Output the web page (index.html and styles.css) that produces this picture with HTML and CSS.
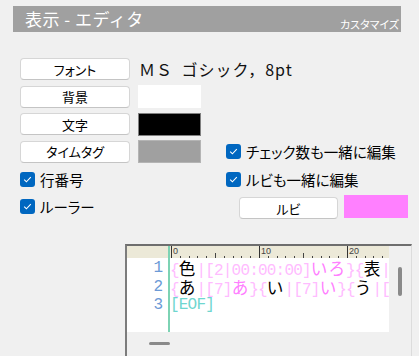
FILE: index.html
```html
<!DOCTYPE html>
<html lang="ja">
<head>
    <meta charset="UTF-8">
    <title>表示 - エディタ</title>
    <link rel="stylesheet" href="styles.css">
</head>
<body>
<div class="header">
    <span class="title">表示 - エディタ</span>
    <span class="sub">カスタマイズ</span>
</div>

<div class="settings">
    <div class="cell">
        <button class="btn">フォント</button>
        <span class="fontname">ＭＳ ゴシック，8pt</span>
    </div>
    <div class="cell"></div>

    <div class="cell">
        <button class="btn">背景</button>
        <span class="swatch white"></span>
    </div>
    <div class="cell"></div>

    <div class="cell">
        <button class="btn">文字</button>
        <span class="swatch black"></span>
    </div>
    <div class="cell"></div>

    <div class="cell">
        <button class="btn">タイムタグ</button>
        <span class="swatch gray"></span>
    </div>
    <div class="cell">
        <label class="check"><svg width="15" height="15" viewBox="0 0 15 15"><rect width="15" height="15" rx="3" fill="#0067c0"/><polyline points="4.2,7.6 6.4,9.8 10.8,5.2" fill="none" stroke="#fff" stroke-width="1.1"/></svg>チェック数も一緒に編集</label>
    </div>

    <div class="cell">
        <label class="check"><svg width="15" height="15" viewBox="0 0 15 15"><rect width="15" height="15" rx="3" fill="#0067c0"/><polyline points="4.2,7.6 6.4,9.8 10.8,5.2" fill="none" stroke="#fff" stroke-width="1.1"/></svg>行番号</label>
    </div>
    <div class="cell">
        <label class="check"><svg width="15" height="15" viewBox="0 0 15 15"><rect width="15" height="15" rx="3" fill="#0067c0"/><polyline points="4.2,7.6 6.4,9.8 10.8,5.2" fill="none" stroke="#fff" stroke-width="1.1"/></svg>ルビも一緒に編集</label>
    </div>

    <div class="cell">
        <label class="check"><svg width="15" height="15" viewBox="0 0 15 15"><rect width="15" height="15" rx="3" fill="#0067c0"/><polyline points="4.2,7.6 6.4,9.8 10.8,5.2" fill="none" stroke="#fff" stroke-width="1.1"/></svg>ルーラー</label>
    </div>
    <div class="cell ruby">
        <button class="btn small">ルビ</button>
        <span class="swatch pink"></span>
    </div>
</div>

<div class="preview">
    <div class="edit">
        <div class="doc">
            <div class="gutter">
                <div class="rulerpad"></div>
                <div class="nums">
                    <div class="line">1</div>
                    <div class="line">2</div>
                    <div class="line">3</div>
                </div>
            </div>
            <div class="text">
                <svg class="ruler" width="219" height="12" viewBox="0 0 219 12">
                    <rect x="1" y="0" width="1" height="12" fill="#333"/>
                    <rect x="89" y="0" width="1" height="12" fill="#333"/>
                    <rect x="177" y="0" width="1" height="12" fill="#333"/>
                    <text x="3" y="8" font-size="9" font-family="Liberation Sans, sans-serif" fill="#444">0</text>
                    <text x="91" y="8" font-size="9" font-family="Liberation Sans, sans-serif" fill="#444">10</text>
                    <text x="179" y="8" font-size="9" font-family="Liberation Sans, sans-serif" fill="#444">20</text>
                    <g fill="#444">
                        <rect x="10" y="10" width="1" height="2"/>
                        <rect x="19" y="10" width="1" height="2"/>
                        <rect x="27" y="10" width="1" height="2"/>
                        <rect x="36" y="10" width="1" height="2"/>
                        <rect x="45" y="7" width="1" height="5"/>
                        <rect x="54" y="10" width="1" height="2"/>
                        <rect x="63" y="10" width="1" height="2"/>
                        <rect x="71" y="10" width="1" height="2"/>
                        <rect x="80" y="10" width="1" height="2"/>
                        <rect x="98" y="10" width="1" height="2"/>
                        <rect x="107" y="10" width="1" height="2"/>
                        <rect x="115" y="10" width="1" height="2"/>
                        <rect x="124" y="10" width="1" height="2"/>
                        <rect x="133" y="7" width="1" height="5"/>
                        <rect x="142" y="10" width="1" height="2"/>
                        <rect x="151" y="10" width="1" height="2"/>
                        <rect x="159" y="10" width="1" height="2"/>
                        <rect x="168" y="10" width="1" height="2"/>
                        <rect x="186" y="10" width="1" height="2"/>
                        <rect x="195" y="10" width="1" height="2"/>
                        <rect x="203" y="10" width="1" height="2"/>
                        <rect x="212" y="10" width="1" height="2"/>
                    </g>
                </svg>
                <div class="lines">
                    <div class="line"><span class="tag">{</span><span class="z">色</span><span class="tag">|[2|00:00:00]</span><span class="z rb">いろ</span><span class="tag">}{</span><span class="z">表</span><span class="tag">|</span></div>
                    <div class="line"><span class="tag">{</span><span class="z">あ</span><span class="tag">|[7]</span><span class="z rb">あ</span><span class="tag">}{</span><span class="z">い</span><span class="tag">|[7]</span><span class="z rb">い</span><span class="tag">}{</span><span class="z">う</span><span class="tag">|[</span></div>
                    <div class="line"><span class="eof">[EOF]</span></div>
                </div>
            </div>
        </div>
        <div class="hbar"><div class="thumb-h"></div></div>
    </div>
    <div class="vbar"><div class="thumb-v"></div></div>
</div>
</body>
</html>
```

FILE: styles.css
```css
html, body {
    margin: 0;
    padding: 0;
}
body {
    background: #f0f0f0;
    font-family: "Noto Sans CJK JP", "Noto Sans", sans-serif;
    color: #000;
    width: 419px;
    height: 356px;
    overflow: hidden;
}

/* タイトルバー */
.header {
    margin: 6px 18px 0 13px;
    height: 26px;
    background: #a0a0a0;
    display: flex;
    justify-content: space-between;
    align-items: center;
    color: #fff;
}
.title {
    padding-left: 12px;
    font-size: 17px;
    line-height: 26px;
    letter-spacing: 0.5px;
}
.sub {
    align-self: flex-end;
    padding-right: 2px;
    font-size: 11px;
    line-height: 15px;
    font-feature-settings: "palt";
}

/* 設定 */
.settings {
    margin: 26px 0 0 20px;
    display: grid;
    grid-template-columns: 206px 1fr;
    grid-auto-rows: 22px;
    row-gap: 5.5px;
}
.cell {
    display: flex;
    align-items: center;
    gap: 8px;
    white-space: nowrap;
}
.btn {
    flex: none;
    width: 110px;
    height: 22px;
    padding: 0;
    background: #fff;
    border: 1px solid #d6d6d6;
    border-bottom-color: #c4c4c4;
    border-radius: 4px;
    font-family: inherit;
    font-size: 13px;
    font-feature-settings: "palt";
    color: #000;
}
.btn.small {
    width: 99px;
    margin-top: 3px;
}
.fontname {
    font-size: 16px;
    letter-spacing: 1px;
    word-spacing: 4px;
    margin-left: 1px;
    color: #111;
}
.swatch {
    flex: none;
    width: 63px;
    height: 23px;
    box-sizing: border-box;
}
.white { background: #fff; }
.black { background: #000; border: 1px solid #808080; }
.gray { background: #a0a0a0; border: 1px solid #b4b4b4; }
.pink { background: #ff80ff; width: 64px; margin-left: -2px; }
.ruby {
    padding-left: 13px;
}
.check {
    display: flex;
    align-items: center;
    gap: 5px;
    font-size: 14.5px;
    font-feature-settings: "palt";
}
.check svg {
    flex: none;
}

/* プレビュー */
.preview {
    margin: 26.5px 0 0 125px;
    width: 287px;
    height: 130px;
    box-sizing: border-box;
    border-top: 2px solid #6e6e6e;
    border-left: 2px solid #7c7c7c;
    border-right: 1px solid #dcdcdc;
    background: #f0f0f0;
    display: flex;
}
.edit {
    width: 262px;
    display: flex;
    flex-direction: column;
}
.doc {
    height: 86px;
    display: flex;
    background: #fff;
}
.gutter {
    width: 41px;
    display: flex;
    flex-direction: column;
}
.rulerpad {
    height: 12px;
    background: #ece9d8;
}
.nums {
    padding: 1px 5px 0 0;
    text-align: right;
    color: #6c9ad6;
    font-family: "Liberation Mono", monospace;
    font-size: 16px;
}
.text {
    flex: 1;
    border-left: 2px solid #7dd3b4;
    overflow: hidden;
}
.ruler {
    display: block;
    background: #ece9d8;
}
.lines {
    padding-top: 1px;
    font-family: "Liberation Mono", monospace;
    font-size: 16px;
    letter-spacing: -0.8px;
}
.line {
    height: 18.5px;
    line-height: 18.5px;
    white-space: pre;
}
.tag {
    color: #ffbcff;
}
.z {
    font-family: "Noto Sans CJK JP", sans-serif;
    font-size: 16.6px;
    letter-spacing: 1px;
    color: #000;
}
.rb {
    color: #ff80ff;
}
.eof {
    color: #6fd6cf;
}
.hbar {
    flex: 1;
    padding: 10px 0 0 22px;
}
.thumb-h {
    width: 21px;
    height: 3px;
    border-radius: 2px;
    background: #8a8a8a;
}
.vbar {
    flex: 1;
    padding: 21px 0 0 9px;
}
.thumb-v {
    width: 4px;
    height: 29px;
    border-radius: 2px;
    background: #8a8a8a;
}
```
